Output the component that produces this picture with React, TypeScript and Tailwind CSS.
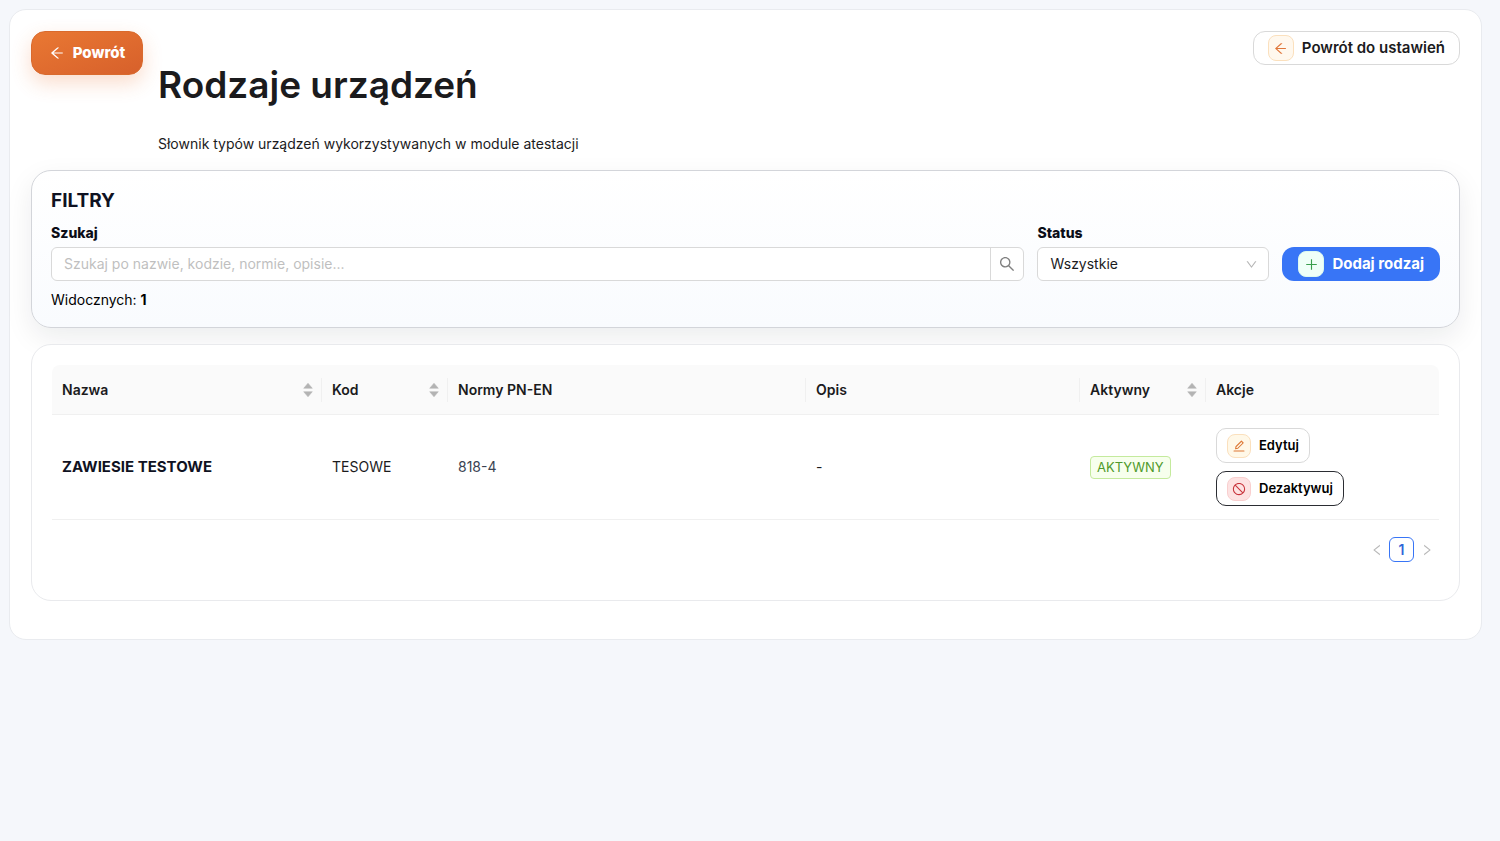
import { useState } from "react";
import type { ReactNode } from "react";
import {
  AiOutlineArrowLeft,
  AiOutlineDown,
  AiOutlineEdit,
  AiOutlineLeft,
  AiOutlinePlus,
  AiOutlineRight,
  AiOutlineSearch,
  AiOutlineStop,
} from "react-icons/ai";

interface DeviceType {
  name: string;
  code: string;
  norms: string;
  description: string;
  active: boolean;
}

const DEVICE_TYPES: DeviceType[] = [
  { name: "ZAWIESIE TESTOWE", code: "TESOWE", norms: "818-4", description: "-", active: true },
];

export default function App() {
  const [query, setQuery] = useState("");
  const [status, setStatus] = useState("all");

  const visible = DEVICE_TYPES.filter((d) => {
    const text = `${d.name} ${d.code} ${d.norms} ${d.description}`.toLowerCase();
    if (!text.includes(query.toLowerCase())) return false;
    return status === "all" || (status === "active") === d.active;
  });

  return (
    <div className="min-h-screen bg-[#f5f7fb] pt-[9px] pr-[18px] pb-6 pl-[9px] font-['Inter',sans-serif] text-sm text-[#1b1b1d]">
      <main className="rounded-[17px] border border-[#e9ebef] bg-white px-[21px] pt-[21px] pb-[38px]">
        <Header />
        <section className="mb-4 rounded-[20px] border border-[#d3d5da] bg-linear-to-b from-white to-[#f9fbfe] px-[19px] pt-5 pb-4 shadow-[0_10px_28px_rgba(15,23,42,0.08)]">
          <h2 className="text-[19px] leading-5 font-bold text-[#0f1222]">FILTRY</h2>
          <div className="mt-3 flex items-end gap-[13px]">
            <div className="flex-1">
              <label htmlFor="search" className="block text-sm leading-5 font-extrabold text-[#0b0d17]">
                Szukaj
              </label>
              <div className="mt-1 flex h-[34px] overflow-hidden rounded-md border border-[#d9d9d9] bg-white">
                <input
                  id="search"
                  type="text"
                  value={query}
                  onChange={(e) => setQuery(e.target.value)}
                  placeholder="Szukaj po nazwie, kodzie, normie, opisie..."
                  className="min-w-0 flex-1 px-3 outline-none placeholder:text-[#bfbfbf]"
                />
                <button
                  type="button"
                  aria-label="Szukaj"
                  className="flex w-[33px] items-center justify-center border-l border-[#d9d9d9] text-[#808080]"
                >
                  <AiOutlineSearch size={18} />
                </button>
              </div>
            </div>
            <div className="w-[232px]">
              <label htmlFor="status" className="block text-sm leading-5 font-extrabold text-[#0b0d17]">
                Status
              </label>
              <div className="relative mt-1">
                <select
                  id="status"
                  value={status}
                  onChange={(e) => setStatus(e.target.value)}
                  className="block h-[34px] w-full appearance-none rounded-md border border-[#d9d9d9] bg-white px-3"
                >
                  <option value="all">Wszystkie</option>
                  <option value="active">Aktywne</option>
                  <option value="inactive">Nieaktywne</option>
                </select>
                <AiOutlineDown
                  size={13}
                  className="pointer-events-none absolute top-[11px] right-[11px] text-[#b5b5b5]"
                />
              </div>
            </div>
            <button
              type="button"
              className="flex h-[34px] items-center gap-2 rounded-xl bg-[#3875f6] px-4 text-[15px] font-bold whitespace-nowrap text-white"
            >
              <IconTile className="size-[26px] border-[#dcfaf0] bg-[#effff8] text-[#389e4d]">
                <AiOutlinePlus size={15} />
              </IconTile>
              Dodaj rodzaj
            </button>
          </div>
          <p className="mt-2 leading-[22px] text-black">
            Widocznych: <strong>{visible.length}</strong>
          </p>
        </section>
        <section className="rounded-[20px] border border-[#e9eaed] bg-white px-5 pt-5 pb-[38px]">
          <DeviceTable rows={visible} />
          <Pagination />
        </section>
      </main>
    </div>
  );
}

function Header() {
  return (
    <header className="mb-[14px] flex items-start">
      <button
        type="button"
        className="flex h-11 w-28 items-center justify-center gap-2 rounded-[14px] border border-[#d96a2d] bg-linear-to-br from-[#e97833] to-[#d7602b] text-[15px] font-extrabold text-white shadow-[0_8px_20px_rgba(234,108,40,0.24)]"
      >
        <AiOutlineArrowLeft size={16} />
        Powrót
      </button>
      <div className="ml-[15px] flex-1 pt-[30px]">
        <h1 className="text-[37px] leading-[48px] font-semibold">Rodzaje urządzeń</h1>
        <p className="mt-[23px] leading-6">Słownik typów urządzeń wykorzystywanych w module atestacji</p>
      </div>
      <button
        type="button"
        className="flex h-[34px] items-center gap-2 rounded-xl border border-[#d9d9d9] bg-white px-[14px] text-[15px] font-semibold"
      >
        <IconTile className="size-[26px] border-[#fbe0bd] bg-[#fff8ee] text-[#e0763a]">
          <AiOutlineArrowLeft size={15} />
        </IconTile>
        Powrót do ustawień
      </button>
    </header>
  );
}

function DeviceTable({ rows }: { rows: DeviceType[] }) {
  return (
    <table className="w-full table-fixed border-separate border-spacing-0 text-left">
      <colgroup>
        <col className="w-[270px]" />
        <col className="w-[126px]" />
        <col className="w-[358px]" />
        <col />
        <col className="w-[126px]" />
        <col className="w-[233px]" />
      </colgroup>
      <thead>
        <tr>
          <HeaderCell label="Nazwa" sortable first />
          <HeaderCell label="Kod" sortable />
          <HeaderCell label="Normy PN-EN" />
          <HeaderCell label="Opis" />
          <HeaderCell label="Aktywny" sortable />
          <HeaderCell label="Akcje" last />
        </tr>
      </thead>
      <tbody>
        {rows.map((row) => (
          <tr key={row.code}>
            <td className="border-b border-[#f0f0f0] px-[10px] text-[15px] font-bold text-[#0f1222]">{row.name}</td>
            <td className="border-b border-[#f0f0f0] px-[10px]">{row.code}</td>
            <td className="border-b border-[#f0f0f0] px-[10px] text-[#3b4352]">{row.norms}</td>
            <td className="border-b border-[#f0f0f0] px-[10px]">{row.description}</td>
            <td className="border-b border-[#f0f0f0] px-[10px]">
              {row.active && (
                <span className="inline-block rounded border border-[#c4ea9d] bg-[#f7ffed] px-[6px] text-[13px] leading-[21px] text-[#4f9a2b]">
                  AKTYWNY
                </span>
              )}
            </td>
            <td className="border-b border-[#f0f0f0] px-[10px] py-[13px]">
              <div className="flex flex-col items-start gap-2">
                <button
                  type="button"
                  className="flex h-[35px] items-center gap-2 rounded-[10px] border border-[#d9d9d9] bg-white px-[10px] text-[13px] font-semibold text-black"
                >
                  <IconTile className="size-6 border-[#fbe0bd] bg-[#fff8e8] text-[#dd7734]">
                    <AiOutlineEdit size={14} />
                  </IconTile>
                  Edytuj
                </button>
                <button
                  type="button"
                  className="flex h-[35px] items-center gap-2 rounded-[10px] border border-[#2b2d33] bg-white px-[10px] text-[13px] font-semibold text-black"
                >
                  <IconTile className="size-6 border-[#f9cfcf] bg-[#fde2e2] text-[#c8323a]">
                    <AiOutlineStop size={14} />
                  </IconTile>
                  Dezaktywuj
                </button>
              </div>
            </td>
          </tr>
        ))}
      </tbody>
    </table>
  );
}

interface HeaderCellProps {
  label: string;
  sortable?: boolean;
  first?: boolean;
  last?: boolean;
}

function HeaderCell({ label, sortable, first, last }: HeaderCellProps) {
  return (
    <th
      className={`h-[50px] border-b border-[#f0f0f0] bg-[#fafafa] p-0 font-semibold ${first ? "rounded-tl-lg" : ""} ${last ? "rounded-tr-lg" : ""}`}
    >
      <div
        className={`flex h-6 items-center justify-between pr-2 pl-[10px] ${last ? "" : "border-r border-[#f0f0f0]"}`}
      >
        {label}
        {sortable && (
          <svg width="10" height="16" viewBox="0 0 10 16" fill="#b3b3b3" aria-hidden="true">
            <path d="M5 1.2 9.3 6.3H.7z" stroke="#b3b3b3" strokeWidth=".5" strokeLinejoin="round" />
            <path d="M5 14.8.7 9.7h8.6z" stroke="#b3b3b3" strokeWidth=".5" strokeLinejoin="round" />
          </svg>
        )}
      </div>
    </th>
  );
}

function Pagination() {
  return (
    <nav aria-label="Strony" className="mt-[17px] flex items-center justify-end">
      <button type="button" disabled aria-label="Poprzednia" className="flex size-[25px] items-center justify-center text-[#b8b8b8]">
        <AiOutlineLeft size={14} />
      </button>
      <button type="button" className="size-[25px] rounded-md border border-[#3875f6] bg-white font-semibold text-[#2f66d8]">
        1
      </button>
      <button type="button" disabled aria-label="Następna" className="flex size-[25px] items-center justify-center text-[#b8b8b8]">
        <AiOutlineRight size={14} />
      </button>
    </nav>
  );
}

function IconTile({ className, children }: { className: string; children: ReactNode }) {
  return (
    <span className={`flex shrink-0 items-center justify-center rounded-lg border ${className}`}>{children}</span>
  );
}
